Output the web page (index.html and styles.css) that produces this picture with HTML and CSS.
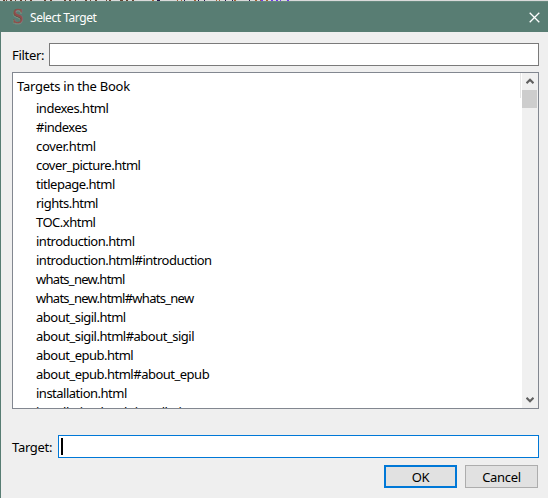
FILE: index.html
```html
<!DOCTYPE html>
<html lang="en">
<head>
<meta charset="utf-8">
<title>Select Target</title>
<link rel="stylesheet" href="styles.css">
</head>
<body>
<div class="backdrop">
  <svg width="548" height="1" shape-rendering="crispEdges"><path stroke="#654431" d="M3 .5h2m1 0h1m3 0h2m3 0h1m4 0h2m3 0h1m4 0h2m12 0h2m4 0h2m12 0h2m3 0h2m4 0h1m9 0h2m3 0h1m4 0h2m9 0h1m2 0h2m9 0h3m3 0h2m4 0h2"/><path stroke="#a35f32" d="M152 .5h2m23 0h1m3 0h1m12 0h2m20 0h1m2 0h1m14 0h2m19 0h2m3 0h1m5 0h2"/><path stroke="#28164d" d="M157 .5h3m24 0h1m13 0h1m5 0h1m20 0h1m6 0h1m16 0h1"/><path stroke="#703aec" d="M261 .5h2m8 0h2m3 0h2m2 0h1m6 0h2"/></svg>
</div>
<main class="dialog">
  <header class="titlebar">
    <svg class="logo" width="13" height="16" viewBox="0 0 13 16"><text class="shadow" x="0" y="14.7">S</text><text x=".5" y="14.2">S</text></svg>
    <h1 class="title">Select Target</h1>
    <svg class="close" width="11" height="11" viewBox="0 0 11 11"><path d="M.7.7l9.6 9.6m0-9.6L.7 10.3"/></svg>
  </header>
  <div class="field filter"><label for="filter">Filter:</label><input id="filter" type="text"></div>
  <section class="list">
    <div class="items">
      <h2>Targets in the Book</h2>
      <ul>
        <li>indexes.html</li><li>#indexes</li><li class="loose">cover.html</li><li>cover_picture.html</li><li>titlepage.html</li><li>rights.html</li><li>TOC.xhtml</li><li>introduction.html</li><li>introduction.html#introduction</li><li class="tight">whats_new.html</li><li class="tight">whats_new.html#whats_new</li><li>about_sigil.html</li><li>about_sigil.html#about_sigil</li><li>about_epub.html</li><li>about_epub.html#about_epub</li><li>installation.html</li><li>installation.html#installation</li>
      </ul>
    </div>
    <div class="divider"></div>
    <div class="scrollbar">
      <svg class="arrow" width="8" height="7" viewBox="0 0 8 7"><path d="M.5 5.3L4 1.8l3.5 3.5"/></svg>
      <div class="thumb"></div>
      <svg class="arrow down" width="8" height="7" viewBox="0 0 8 7"><path d="M.5 1.7L4 5.2l3.5-3.5"/></svg>
    </div>
  </section>
  <div class="field target"><label>Target:</label><div class="entry"><span class="caret"></span></div></div>
  <div class="actions"><button class="primary">OK</button><button>Cancel</button></div>
</main>
</body>
</html>
```
FILE: styles.css
```css
* { box-sizing: border-box; }
body { margin: 0; width: 548px; height: 498px; overflow: hidden; background: #efefef; color: #000; font: 13px/19px "Noto Sans", "Open Sans", sans-serif; letter-spacing: -.3px; }
.backdrop { height: 1px; background: #dadada; }
.backdrop svg { display: block; }
.dialog { height: 497px; border-left: 1px solid #587d73; }
.titlebar { display: flex; align-items: center; height: 31px; padding: 0 8px 0 11px; background: #587d73; border-top: 1px solid #67897f; color: #fff; }
.logo { overflow: visible; }
.logo text { fill: #914d49; stroke: #914d49; stroke-width: .3; font: 20px "Liberation Serif", serif; letter-spacing: 0; }
.logo .shadow { fill: #445751; stroke: #87958b; stroke-width: .7; }
.title { margin: 0 auto 0 5px; font-size: 12px; font-weight: 400; letter-spacing: -.45px; }
.close path { stroke: #fff; stroke-width: 1.3; }
.field { display: flex; align-items: center; height: 23px; margin: 11px 9px 0 11px; }
.field label { width: 37px; white-space: nowrap; padding-top: 1px; }
.field input { flex: 1; height: 23px; margin: 0; border: 1px solid #7a7a7a; background: #fff; padding: 2px; outline: 0; }
.list { display: flex; height: 337px; margin: 6px 9px 0 11px; border: 1px solid #828790; background: #fff; }
.items { flex: 1; overflow: hidden; padding: 4px 0 0 4px; }
.items h2 { margin: 0; height: 22px; font-size: inherit; font-weight: 400; letter-spacing: -.25px; }
.items ul { margin: 0; padding: 0 0 0 19px; list-style: none; letter-spacing: -.5px; }
.items li { height: 19px; white-space: nowrap; }
.items .loose { letter-spacing: -.3px; }
.items .tight { letter-spacing: -.72px; }
.divider { width: 1px; height: 25px; margin-right: 1px; background: #e5e5e5; }
.scrollbar { display: flex; flex-direction: column; align-items: center; width: 16px; padding-right: 1px; background: #f0f0f0; }
.arrow { margin: 5px 0; }
.arrow path { fill: none; stroke: #606060; stroke-width: 2.2; }
.thumb { width: 15px; height: 18px; background: #cdcdcd; }
.arrow.down { margin-top: auto; margin-bottom: 5px; }
.field.target { margin-top: 26px; }
.target label { width: 46px; }
.entry { flex: 1; height: 23px; padding: 2px; border: 1px solid #0078d7; background: #fff; }
.caret { display: block; width: 2px; height: 17px; background: #000; }
.actions { display: flex; justify-content: flex-end; gap: 8px; margin: 7px 10px 0; }
.actions button { width: 73px; height: 23px; padding: 1px 0 0; border: 1px solid #adadad; background: #e1e1e1; color: #000; font: inherit; letter-spacing: inherit; line-height: 18px; }
.actions .primary { border: 2px solid #0078d7; padding: 0; }
```
